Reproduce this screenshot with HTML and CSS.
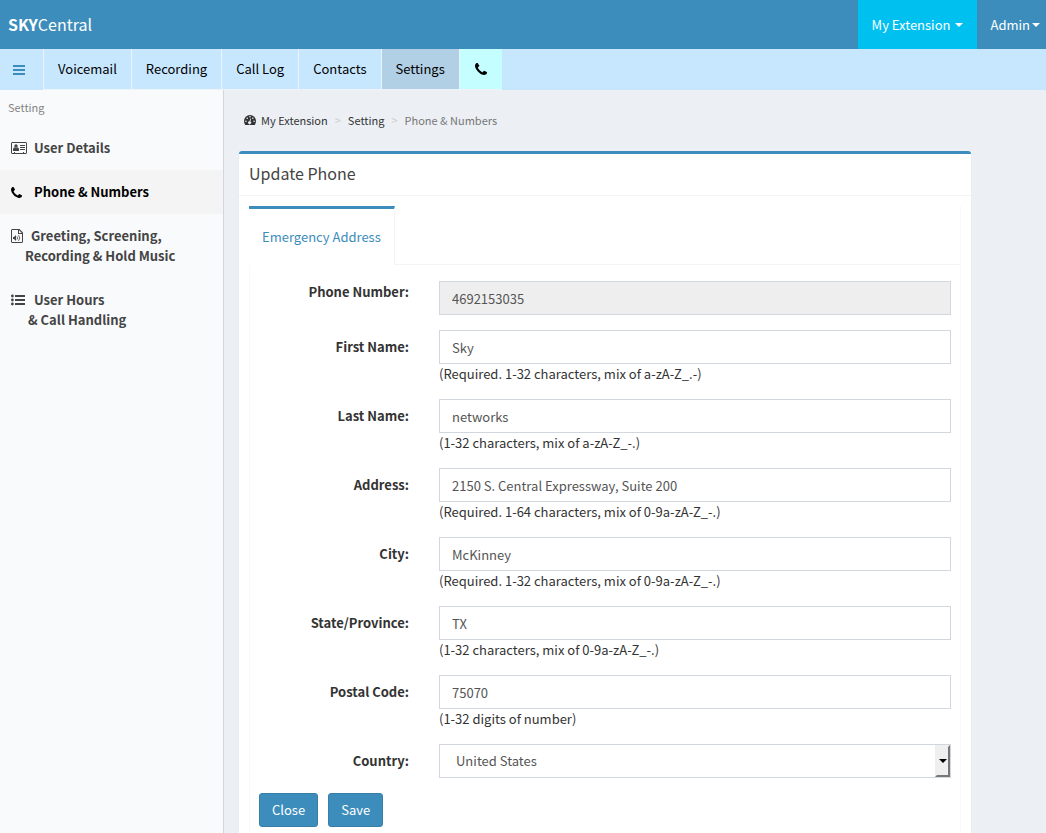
FILE: index.html
```html
<!DOCTYPE html>
<html lang="en">
<head>
    <meta charset="UTF-8">
    <meta name="viewport" content="width=device-width, initial-scale=1.0">
    <title>SKYCentral - Phone &amp; Numbers</title>
    <link rel="stylesheet" href="styles.css">
</head>
<body>
    <svg class="sprite" aria-hidden="true">
        <symbol id="phone" viewBox="192 128 1408 1408">
            <path d="M1600 1240q0 27-10 70.500t-21 68.500q-21 50-122 106-94 51-186 51-27 0-52.500-3.500t-57.500-12.500-47.500-14.500-55.500-20.500-49-18q-98-35-175-83-128-79-264.500-215.500t-215.500-264.500q-48-77-83-175-3-9-18-49t-20.500-55.500-14.500-47.500-12.500-57.500-3.500-52.500q0-92 51-186 56-101 106-122 25-11 68.500-21t70.500-10q14 0 21 3 18 6 53 76 11 19 30 54t35 63.500 31 53.500q3 4 17.500 25t21.500 35.500 7 28.500q0 20-28.500 50t-62 55-62 53-28.500 46q0 9 5 22.500t8.500 20.500 14 24 11.500 19q76 137 174 235t235 174q2 1 19 11.500t24 14 20.500 8.500 22.500 5q18 0 46-28.500t53-62 55-62 50-28.500q14 0 28.500 7t35.500 21.500 25 17.500q25 15 53.500 31t63.500 35 54 30q70 35 76 53 3 7 3 21z"/>
        </symbol>
    </svg>

    <header class="topbar">
        <a href="#" class="logo"><b>SKY</b>Central</a>
        <nav class="account">
            <a href="#" class="account-link current">My Extension <span class="caret"></span></a>
            <a href="#" class="account-link admin">Admin<span class="caret"></span></a>
        </nav>
    </header>

    <nav class="menu">
        <button type="button" class="toggle" aria-label="Toggle navigation">
            <svg width="12" height="10" viewBox="0 0 12 10"><path d="M0 0h12v2H0zM0 4h12v2H0zM0 8h12v2H0z"/></svg>
        </button>
        <a href="#">Voicemail</a>
        <a href="#">Recording</a>
        <a href="#">Call Log</a>
        <a href="#">Contacts</a>
        <a href="#" class="active">Settings</a>
        <a href="#" class="call" aria-label="Call"><svg width="12" height="12"><use href="#phone"/></svg></a>
    </nav>

    <div class="wrapper">
        <aside class="sidebar">
            <p class="sidebar-title">Setting</p>
            <ul>
                <li>
                    <a href="#">
                        <svg width="16" height="12" viewBox="0 0 16 12">
                            <path fill-rule="evenodd" d="M1 0h14l1 1v10l-1 1H1l-1-1V1zM1 1v10h2v-1h1v1h8v-1h1v1h2V1z"/>
                            <circle cx="5" cy="4" r="1.700"/>
                            <path d="M2 9V7.500Q2 5.500 3.500 5.300L5 6l1.500-.7Q8 5.500 8 7.500V9zM9 3h5v1H9zM9 5h5v1H9zM9 7h5v1H9z"/>
                        </svg>
                        <span>User Details</span>
                    </a>
                </li>
                <li class="active">
                    <a href="#">
                        <svg width="16" height="11" viewBox="0 0 16 11"><use href="#phone" width="11" height="11"/></svg>
                        <span>Phone &amp; Numbers</span>
                    </a>
                </li>
                <li>
                    <a href="#" class="narrow">
                        <svg width="12" height="14" viewBox="0 0 12 14">
                            <path fill-rule="evenodd" d="M1 0h7.500L12 3.500V13l-1 1H1l-1-1V1zM1 1v12h10V5H7V1zM8 1.200V4h2.800z"/>
                            <path d="M2 8h1l2-2v6L3 10H2z"/>
                            <path fill="none" stroke="currentColor" stroke-width=".8" d="M6 7.500q1.200 1.500 0 3M7.500 6.200q2.600 2.800 0 5.600"/>
                        </svg>
                        <span>Greeting, Screening,</span>
                        <span class="second">Recording &amp; Hold Music</span>
                    </a>
                </li>
                <li>
                    <a href="#">
                        <svg width="16" height="12" viewBox="0 0 16 12">
                            <path d="M4 1h10v2H4zM4 5h10v2H4zM4 9h10v2H4z"/>
                            <circle cx="1.400" cy="2" r="1.400"/><circle cx="1.400" cy="6" r="1.400"/><circle cx="1.400" cy="10" r="1.400"/>
                        </svg>
                        <span>User Hours</span>
                        <span class="second call-handling">&amp; Call Handling</span>
                    </a>
                </li>
            </ul>
        </aside>

        <main class="content">
            <ol class="breadcrumb">
                <li>
                    <a href="#">
                        <svg width="12" height="10" viewBox="0 0 12 10">
                            <path d="M6 0a6 6 0 0 1 6 6q0 2.200-1.200 4H1.200Q0 8.200 0 6a6 6 0 0 1 6-6z"/>
                            <g class="dial">
                                <circle cx="1.900" cy="6.200" r=".8"/><circle cx="3.200" cy="3.200" r=".8"/><circle cx="6" cy="1.800" r=".8"/><circle cx="8.800" cy="3.200" r=".8"/><circle cx="10.100" cy="6.200" r=".8"/>
                                <path d="M6.200 3.500l.8.2-.6 2.700a1.500 1.500 0 1 1-.9-.2z"/>
                            </g>
                        </svg>
                        My Extension
                    </a>
                </li>
                <li><a href="#">Setting</a></li>
                <li class="here">Phone &amp; Numbers</li>
            </ol>

            <section class="box">
                <h1>Update Phone</h1>
                <div class="tabs">
                    <div class="tab-row">
                        <a href="#" class="tab">Emergency Address</a>
                    </div>
                    <form class="tab-content">
                        <div class="row">
                            <label for="phoneNumber" class="top">Phone Number:</label>
                            <input type="text" id="phoneNumber" value="4692153035" readonly>
                        </div>
                        <div class="row">
                            <label for="firstName">First Name:</label>
                            <input type="text" id="firstName" value="Sky">
                            <p>(Required. 1-32 characters, mix of a-zA-Z_.-)</p>
                        </div>
                        <div class="row">
                            <label for="lastName">Last Name:</label>
                            <input type="text" id="lastName" value="networks">
                            <p>(1-32 characters, mix of a-zA-Z_-.)</p>
                        </div>
                        <div class="row">
                            <label for="address">Address:</label>
                            <input type="text" id="address" value="2150 S. Central Expressway, Suite 200">
                            <p>(Required. 1-64 characters, mix of 0-9a-zA-Z_-.)</p>
                        </div>
                        <div class="row">
                            <label for="city">City:</label>
                            <input type="text" id="city" value="McKinney">
                            <p>(Required. 1-32 characters, mix of 0-9a-zA-Z_-.)</p>
                        </div>
                        <div class="row">
                            <label for="state">State/Province:</label>
                            <input type="text" id="state" value="TX">
                            <p>(1-32 characters, mix of 0-9a-zA-Z_-.)</p>
                        </div>
                        <div class="row">
                            <label for="postal">Postal Code:</label>
                            <input type="text" id="postal" value="75070">
                            <p>(1-32 digits of number)</p>
                        </div>
                        <div class="row">
                            <label for="country">Country:</label>
                            <div class="select">
                                <select id="country">
                                    <option selected>United States</option>
                                    <option>Canada</option>
                                </select>
                                <span class="arrow"></span>
                            </div>
                        </div>
                        <div class="buttons">
                            <button type="button">Close</button>
                            <button type="submit">Save</button>
                        </div>
                    </form>
                </div>
            </section>
        </main>
    </div>
</body>
</html>
```
FILE: styles.css
```css
* {
    box-sizing: border-box;
}

body {
    margin: 0;
    font-family: "Source Sans Pro", "Noto Sans CJK SC", sans-serif;
    font-size: 13px;
    line-height: 20px;
    color: #333;
    background-color: #ecf0f5;
}

a {
    color: inherit;
    text-decoration: none;
}

svg {
    fill: currentColor;
}

button, input, select {
    font: inherit;
}

.sprite {
    display: none;
}

/* Top bar */
.topbar {
    display: flex;
    justify-content: space-between;
    height: 49px;
    background-color: #3c8dbc;
    color: #fff;
}

.logo {
    padding: 0 8px;
    font-size: 16px;
    line-height: 49px;
}

.account {
    display: flex;
}

.account-link {
    display: flex;
    align-items: center;
    gap: 5px;
    padding: 0 14px;
}

.account-link.current {
    background-color: #00c0ef;
}

.account-link.admin {
    gap: 2px;
    padding: 0 6px 0 13px;
}

.caret {
    border-top: 4px solid #fff;
    border-left: 4px solid transparent;
    border-right: 4px solid transparent;
}

/* Main menu */
.menu {
    display: flex;
    height: 41px;
    background-color: #c7e7ff;
    color: #000;
}

.menu a {
    display: flex;
    align-items: center;
    padding: 0 14px;
    border-right: 1px solid #eef3f8;
    border-bottom: 1px solid #eef3f8;
}

.menu .active {
    background-color: #b1cfe5;
}

.menu .call {
    padding: 0 15px;
    background-color: #c4feff;
    border-right: 0;
}

.toggle {
    width: 44px;
    padding: 0 6px 0 0;
    border: 0;
    border-right: 1px solid #eef3f8;
    background: none;
    color: #3c8dbc;
}

/* Sidebar */
.wrapper {
    display: flex;
    min-height: calc(100vh - 90px);
}

.sidebar {
    flex: 0 0 224px;
    border-right: 1px solid #d2d6de;
    background-color: #f9fafc;
}

.sidebar-title {
    margin: 0;
    padding: 7px 8px 9px;
    font-size: 11px;
    color: #848484;
}

.sidebar ul {
    margin: 0;
    padding: 0;
    list-style: none;
}

.sidebar li {
    padding: 12px 11px;
    font-weight: 600;
    color: #444;
}

.sidebar li.active {
    background-color: #f4f4f5;
    color: #000;
}

.sidebar a {
    display: grid;
    grid-template-columns: 16px 1fr;
    column-gap: 7px;
    align-items: center;
}

.sidebar .narrow {
    grid-template-columns: 12px 1fr;
    column-gap: 8px;
}

.second {
    grid-column: 1 / -1;
    padding-left: 14px;
}

.call-handling {
    padding-left: 17px;
}

/* Content */
.content {
    flex: 1;
    padding: 20px 75px 0 15px;
}

.breadcrumb {
    display: flex;
    margin: 0 0 21px;
    padding: 0 5px;
    list-style: none;
    font-size: 11px;
}

.breadcrumb a {
    display: flex;
    align-items: center;
    gap: 5px;
}

.breadcrumb li + li::before {
    content: ">";
    padding: 0 7px;
    color: #ccc;
}

.breadcrumb li {
    display: flex;
}

.breadcrumb .here {
    color: #777;
}

.dial {
    fill: #ecf0f5;
}

.box {
    border-top: 3px solid #3c8dbc;
    border-radius: 3px 3px 0 0;
    background-color: #fff;
    box-shadow: 0 1px 1px rgba(0, 0, 0, 0.1);
}

.box h1 {
    margin: 0;
    padding: 9px 10px 11px;
    border-bottom: 1px solid #f4f4f4;
    font-size: 16px;
    font-weight: 400;
    line-height: 21px;
    color: #444;
}

.tabs {
    margin: 10px 10px 0;
    border-left: 1px solid #f9f9f9;
    border-right: 1px solid #f9f9f9;
}

.tab-row {
    display: flex;
    border-bottom: 1px solid #f4f4f4;
}

.tab {
    margin: 0 0 -1px -1px;
    padding: 18px 13px;
    border-top: 3px solid #3c8dbc;
    border-right: 1px solid #f4f4f4;
    background-color: #fff;
    color: #3c8dbc;
}

/* Form */
.tab-content {
    padding: 16px 9px 10px;
}

.row {
    display: grid;
    grid-template-columns: 150px 1fr;
    column-gap: 30px;
    margin-bottom: 15px;
}

.row label {
    padding-top: 7px;
    font-weight: 700;
    text-align: right;
}

.row .top {
    padding-top: 1px;
}

.row input, .row select {
    width: 100%;
    height: 34px;
    padding: 6px 12px;
    border: 1px solid #d2d6de;
    border-radius: 0;
    background-color: #fff;
    color: #555;
}

.row input:read-only {
    background-color: #eee;
}

.row p {
    grid-column: 2;
    margin: 0;
}

.select {
    position: relative;
}

.row select {
    display: block;
    padding-left: 16px;
    appearance: none;
}

.arrow {
    position: absolute;
    top: 1px;
    right: 1px;
    display: flex;
    align-items: center;
    justify-content: center;
    width: 15px;
    height: 32px;
    border: 2px solid #777;
    border-top-color: #efefef;
    border-left-color: #efefef;
    background-color: #efefef;
    pointer-events: none;
}

.arrow::after {
    content: "";
    border-top: 4px solid #000;
    border-left: 4px solid transparent;
    border-right: 4px solid transparent;
}

.buttons {
    display: flex;
    gap: 10px;
}

.buttons button {
    padding: 6px 12px;
    border: 1px solid #367fa9;
    border-radius: 3px;
    background-color: #3c8dbc;
    color: #fff;
}
```
